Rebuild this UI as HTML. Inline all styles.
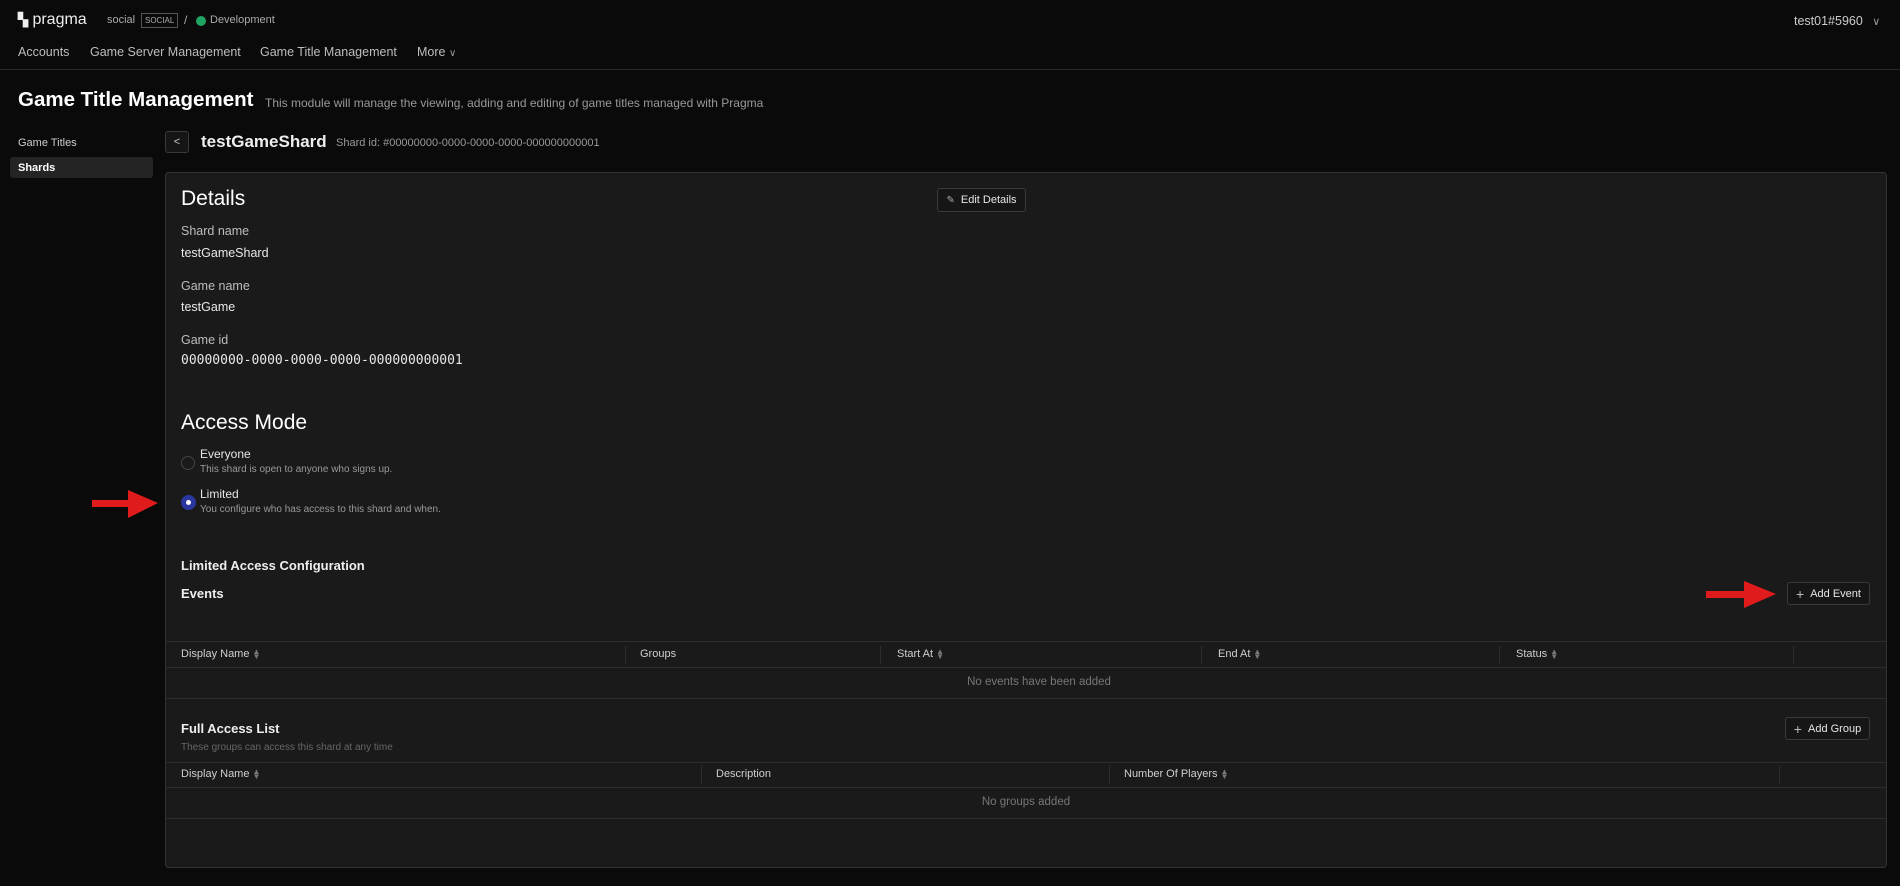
<!DOCTYPE html>
<html><head><meta charset="utf-8"><style>
*{margin:0;padding:0;box-sizing:border-box}
body{width:1900px;height:886px;background:#0a0a0a;font-family:"Liberation Sans",sans-serif;color:#e6e6e6;position:relative;overflow:hidden}
.a{position:absolute;white-space:nowrap}
.lbl{font-size:12.5px;color:#bdbdbd}
.val{font-size:12.5px;color:#e8e8e8}
.th{font-size:11px;color:#cfcfcf}
.hl{position:absolute;height:1px;background:#2c2c2c}
.vl{position:absolute;width:1px;background:#2c2c2c}
.btn{position:absolute;border:1px solid #3a3a3a;border-radius:3px;background:#161616;font-size:11px;color:#e6e6e6;display:flex;align-items:center;justify-content:center;gap:6px}
.sort{display:inline-block;font-size:8px;color:#777;vertical-align:middle;line-height:5px;margin-left:3px}
</style></head><body>
<div class="a" style="left:18px;top:11px;font-size:16px;color:#eee;"><span style="font-weight:bold;font-size:13px">▚</span> pragma</div>
<div class="a" style="left:107px;top:14px;font-size:11px;color:#aaa">social</div>
<div class="a" style="left:141px;top:13px;font-size:8px;color:#aaa;border:1px solid #555;padding:2px 3px">SOCIAL</div>
<div class="a" style="left:184px;top:13px;font-size:12px;color:#aaa">/</div>
<div class="a" style="left:196px;top:16px;width:10px;height:10px;border-radius:50%;background:#1fa463"></div>
<div class="a" style="left:210px;top:14px;font-size:11px;color:#aaa">Development</div>
<div class="a" style="left:1794px;top:14px;font-size:12.5px;color:#ccc">test01#5960 <span style="color:#999;font-size:11px;margin-left:6px">∨</span></div>
<div class="a" style="left:18px;top:45px;font-size:12.5px;color:#bdbdbd">Accounts</div>
<div class="a" style="left:90px;top:45px;font-size:12.5px;color:#bdbdbd">Game Server Management</div>
<div class="a" style="left:260px;top:45px;font-size:12.5px;color:#bdbdbd">Game Title Management</div>
<div class="a" style="left:417px;top:45px;font-size:12.5px;color:#bdbdbd">More <span style="font-size:10px;color:#999">∨</span></div>
<div class="hl" style="left:0;top:69px;width:1900px;background:#2a2a2a"></div>
<div class="a" style="left:18px;top:88px;font-size:20.5px;font-weight:bold;color:#fff">Game Title Management</div>
<div class="a" style="left:265px;top:96px;font-size:12px;color:#999">This module will manage the viewing, adding and editing of game titles managed with Pragma</div>
<div class="a" style="left:18px;top:137px;font-size:11px;color:#ccc">Game Titles</div>
<div class="a" style="left:10px;top:157px;width:143px;height:21px;background:#242424;border-radius:3px"></div>
<div class="a" style="left:18px;top:162px;font-size:11px;font-weight:bold;color:#fff">Shards</div>
<div class="a" style="left:165px;top:131px;width:24px;height:22px;border:1px solid #3a3a3a;border-radius:3px;background:#151515;color:#ccc;font-size:11px;text-align:center;line-height:20px">&lt;</div>
<div class="a" style="left:201px;top:132px;font-size:17px;font-weight:bold;color:#eee">testGameShard</div>
<div class="a" style="left:336px;top:137px;font-size:11px;color:#999">Shard id: #00000000-0000-0000-0000-000000000001</div>
<div class="a" style="left:165px;top:172px;width:1722px;height:696px;background:#1a1a1a;border:1px solid #333;border-radius:4px"></div>
<div class="a" style="left:181px;top:187px;font-size:21px;color:#fff">Details</div>
<div class="btn" style="left:937px;top:188px;width:89px;height:24px"><span style="font-size:10px;color:#aaa">✎</span>Edit Details</div>
<div class="a lbl" style="left:181px;top:224px">Shard name</div>
<div class="a val" style="left:181px;top:246px">testGameShard</div>
<div class="a lbl" style="left:181px;top:279px">Game name</div>
<div class="a val" style="left:181px;top:300px">testGame</div>
<div class="a lbl" style="left:181px;top:333px">Game id</div>
<div class="a val" style="left:181px;top:353px;font-family:'DejaVu Sans Mono',monospace;font-size:13px">00000000-0000-0000-0000-000000000001</div>
<div class="a" style="left:181px;top:411px;font-size:21px;color:#fff">Access Mode</div>
<div class="a" style="left:181px;top:456px;width:14px;height:14px;border-radius:50%;border:1px solid #444"></div>
<div class="a" style="left:200px;top:447px;font-size:12px;color:#e6e6e6">Everyone</div>
<div class="a" style="left:200px;top:464px;font-size:10px;color:#999">This shard is open to anyone who signs up.</div>
<div class="a" style="left:181px;top:495px;width:15px;height:15px;border-radius:50%;background:#2a37a0;"></div>
<div class="a" style="left:186px;top:500px;width:5px;height:5px;border-radius:50%;background:#fff"></div>
<div class="a" style="left:200px;top:487px;font-size:12px;color:#e6e6e6">Limited</div>
<div class="a" style="left:200px;top:504px;font-size:10px;color:#999">You configure who has access to this shard and when.</div>
<svg class="a" style="left:90px;top:488px" width="72" height="32"><rect x="2" y="12" width="40" height="7" fill="#e01b1b"/><polygon points="38,2 68,15 38,30" fill="#e01b1b"/></svg>
<div class="a" style="left:181px;top:558px;font-size:13px;font-weight:bold;color:#eee">Limited Access Configuration</div>
<div class="a" style="left:181px;top:586px;font-size:13px;font-weight:bold;color:#eee">Events</div>
<svg class="a" style="left:1704px;top:580px" width="74" height="32"><rect x="2" y="11" width="42" height="7" fill="#e01b1b"/><polygon points="40,1 72,14 40,28" fill="#e01b1b"/></svg>
<div class="btn" style="left:1787px;top:582px;width:83px;height:23px"><span style="font-size:14px;color:#bbb">+</span>Add Event</div>
<div class="hl" style="left:166px;top:641px;width:1720px"></div>
<div class="hl" style="left:166px;top:667px;width:1720px"></div>
<div class="hl" style="left:166px;top:698px;width:1720px"></div>
<div class="vl" style="left:625px;top:646px;height:18px"></div>
<div class="vl" style="left:880px;top:646px;height:18px"></div>
<div class="vl" style="left:1201px;top:646px;height:18px"></div>
<div class="vl" style="left:1499px;top:646px;height:18px"></div>
<div class="vl" style="left:1793px;top:646px;height:18px"></div>
<div class="a th" style="left:181px;top:648px">Display Name<span class="sort">▲<br>▼</span></div>
<div class="a th" style="left:640px;top:648px">Groups</div>
<div class="a th" style="left:897px;top:648px">Start At<span class="sort">▲<br>▼</span></div>
<div class="a th" style="left:1218px;top:648px">End At<span class="sort">▲<br>▼</span></div>
<div class="a th" style="left:1516px;top:648px">Status<span class="sort">▲<br>▼</span></div>
<div class="a" style="left:0;width:2078px;top:676px;text-align:center;font-size:11.5px;color:#777">No events have been added</div>
<div class="a" style="left:181px;top:721px;font-size:13px;font-weight:bold;color:#eee">Full Access List</div>
<div class="a" style="left:181px;top:742px;font-size:10px;color:#666">These groups can access this shard at any time</div>
<div class="btn" style="left:1785px;top:717px;width:85px;height:23px"><span style="font-size:14px;color:#bbb">+</span>Add Group</div>
<div class="hl" style="left:166px;top:762px;width:1720px"></div>
<div class="hl" style="left:166px;top:787px;width:1720px"></div>
<div class="hl" style="left:166px;top:818px;width:1720px"></div>
<div class="vl" style="left:701px;top:766px;height:18px"></div>
<div class="vl" style="left:1109px;top:766px;height:18px"></div>
<div class="vl" style="left:1779px;top:766px;height:18px"></div>
<div class="a th" style="left:181px;top:768px">Display Name<span class="sort">▲<br>▼</span></div>
<div class="a th" style="left:716px;top:768px">Description</div>
<div class="a th" style="left:1124px;top:768px">Number Of Players<span class="sort">▲<br>▼</span></div>
<div class="a" style="left:0;width:2052px;top:796px;text-align:center;font-size:11.5px;color:#777">No groups added</div>
</body></html>
